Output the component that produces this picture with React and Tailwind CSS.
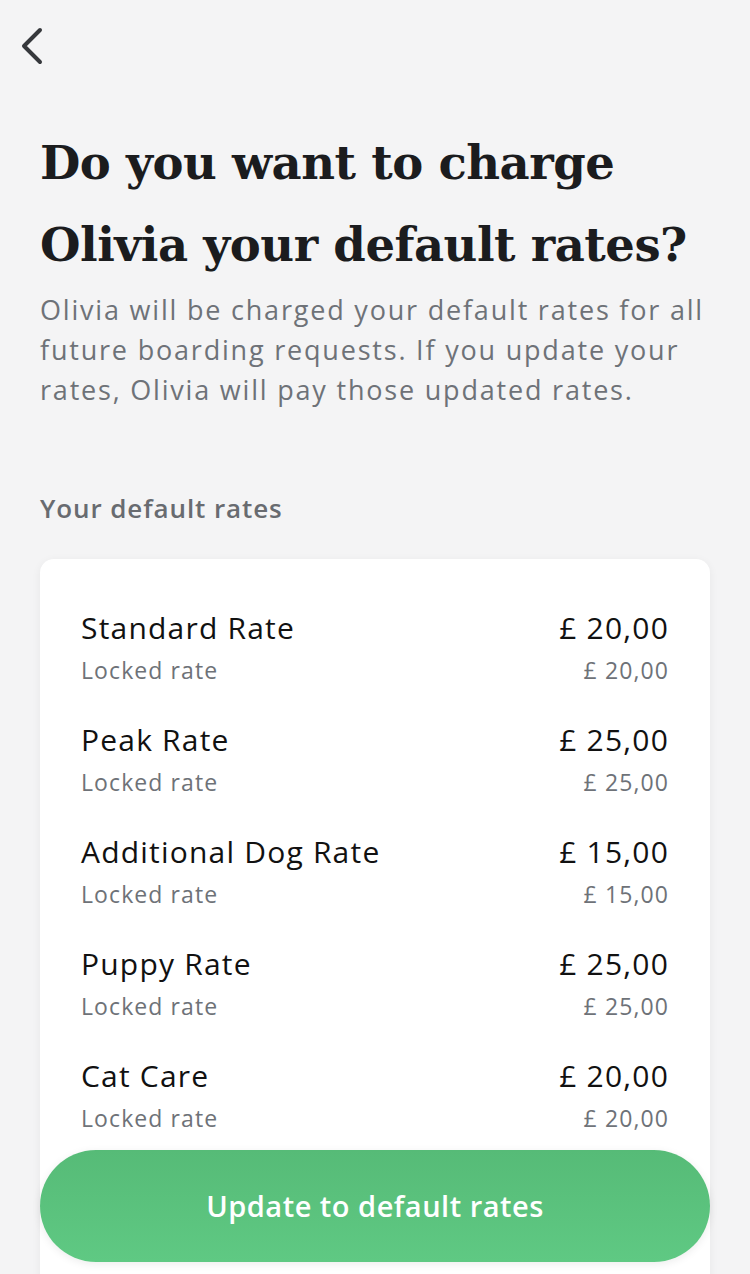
const rates = [
  { name: 'Standard Rate', price: '£ 20,00' },
  { name: 'Peak Rate', price: '£ 25,00' },
  { name: 'Additional Dog Rate', price: '£ 15,00' },
  { name: 'Puppy Rate', price: '£ 25,00' },
  { name: 'Cat Care', price: '£ 20,00' },
];

export default function App() {
  return (
    <div className="relative h-[1274px] overflow-hidden bg-[#f4f4f5] font-['Open_Sans','Lato',sans-serif]">
      {/* Back */}
      <div className="h-[122px] pl-[16px] pt-[26px]">
        <svg width="30" height="40" viewBox="0 0 30 40" fill="none">
          <path d="M24 4 L8 20 L24 36" stroke="#36383c" strokeWidth="4" strokeLinecap="round" strokeLinejoin="round" />
        </svg>
      </div>

      <div className="px-10">
        <h1 className="font-['DejaVu_Serif',serif] text-[46.5px] font-bold leading-[82px] tracking-[-0.5px] text-[#1b1c1e]">
          Do you want to charge Olivia your default rates?
        </h1>
        <p className="mt-[4px] text-[27px] leading-[40px] tracking-[1.8px] text-[#6e7278]">
          Olivia will be charged your default rates for all future boarding requests. If you update your rates, Olivia will pay those updated rates.
        </p>

        <h2 className="mt-[80px] text-[26px] font-semibold leading-[36px] tracking-[0.9px] text-[#686b70]">Your default rates</h2>

        <div className="mt-[33px] rounded-[14px] bg-white px-[41px] pb-[200px] pt-[49px] shadow-[0_2px_10px_rgba(0,0,0,0.06)]">
          <div className="flex flex-col gap-[34px]">
            {rates.map((r) => (
              <div key={r.name}>
                <div className="flex items-center justify-between text-[30px] leading-[40px] tracking-[1.2px] text-[#111]">
                  <span>{r.name}</span>
                  <span>{r.price}</span>
                </div>
                <div className="mt-[6px] flex items-center justify-between text-[23px] leading-[32px] tracking-[1.1px] text-[#6e7278]">
                  <span>Locked rate</span>
                  <span>{r.price}</span>
                </div>
              </div>
            ))}
          </div>
        </div>
      </div>

      {/* Bottom bar */}
      <div className="absolute inset-x-0 bottom-0">
        <div className="mx-10 h-[24px] bg-gradient-to-b from-white/0 to-white/90" />
        <div className="px-10 pb-[12px]">
          <button className="flex h-[112px] w-full items-center justify-center rounded-full bg-gradient-to-b from-[#56bb77] to-[#5fc983] text-[29px] font-semibold tracking-[0.5px] text-white shadow-[0_2px_8px_rgba(0,0,0,0.08)]">
            Update to default rates
          </button>
        </div>
      </div>
    </div>
  );
}
